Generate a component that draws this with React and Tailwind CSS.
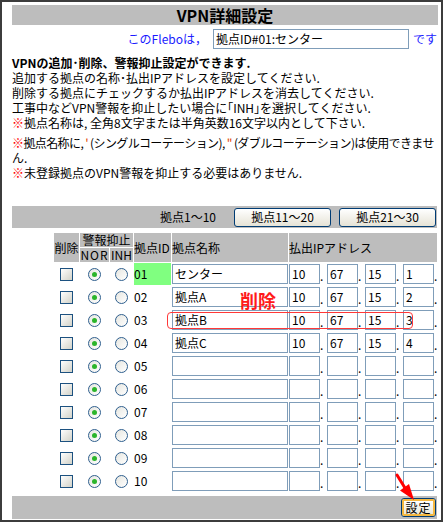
import React from "react";

const rows = [
  { id: "01", name: "センター", ip: ["10", "67", "15", "1"] },
  { id: "02", name: "拠点A", ip: ["10", "67", "15", "2"] },
  { id: "03", name: "拠点B", ip: ["10", "67", "15", "3"] },
  { id: "04", name: "拠点C", ip: ["10", "67", "15", "4"] },
  { id: "05", name: "", ip: ["", "", "", ""] },
  { id: "06", name: "", ip: ["", "", "", ""] },
  { id: "07", name: "", ip: ["", "", "", ""] },
  { id: "08", name: "", ip: ["", "", "", ""] },
  { id: "09", name: "", ip: ["", "", "", ""] },
  { id: "10", name: "", ip: ["", "", "", ""] },
];

function Checkbox() {
  return (
    <span className="block w-[13px] h-[13px] border border-[#1c5180] bg-linear-to-br from-white to-[#d2d2c8]" />
  );
}

function Radio({ checked }) {
  return (
    <span className="flex items-center justify-center w-[13px] h-[13px] rounded-full border border-[#2f5f8e] bg-linear-to-br from-[#e6e6e0] to-white">
      {checked && <span className="block w-[5px] h-[5px] rounded-full bg-[#2bb52b]" />}
    </span>
  );
}

function Field({ w, value }) {
  return (
    <div
      className={`${w} h-[20px] border border-[#7f9db9] bg-white px-[2px] flex items-center text-[12px] leading-[14px] text-black whitespace-nowrap overflow-hidden`}
    >
      {value}
    </div>
  );
}

function XpButton({ children, w }) {
  return (
    <div
      className={`${w} h-[19px] rounded-[3px] border border-[#003c74] bg-linear-to-b from-white to-[#e6e3d6] flex items-center justify-center text-[12px] leading-[14px] text-black`}
    >
      {children}
    </div>
  );
}

const Red = ({ children }) => <span className="text-[#ff0000]">{children}</span>;

export default function App() {
  return (
    <div className="relative w-[443px] h-[522px] bg-white border-2 border-[#3c3c3c] overflow-hidden font-['Noto_Sans_CJK_JP','Noto_Sans',sans-serif] text-black">
      <div className="ml-[10px] mt-[3px] w-[426px]">
        {/* Title */}
        <div className="h-[20px] bg-[#bdbdbd] flex items-center justify-center text-[16px] leading-[20px] font-bold">
          VPN詳細設定
        </div>

        {/* Flebo row */}
        <div className="mt-[4px] h-[20px] flex items-center justify-end pr-[1px] text-[12px] leading-[14px]">
          <span className="text-[#1a1aff]">このFleboは，</span>
          <div className="ml-[6px]">
            <Field w="w-[196px]" value="拠点ID#01:センター" />
          </div>
          <span className="ml-[4px] text-[#1a1aff]">です</span>
        </div>

        {/* Description */}
        <div className="mt-[6px] text-[12px] leading-[15px]">
          <p className="font-bold">VPNの追加･削除、警報抑止設定ができます.</p>
          <p>追加する拠点の名称･払出IPアドレスを設定してください.</p>
          <p>削除する拠点にチェックするか払出IPアドレスを消去してください.</p>
          <p>工事中などVPN警報を抑止したい場合に｢INH｣を選択してください.</p>
          <p>
            <Red>※</Red>拠点名称は, 全角8文字または半角英数16文字以内として下さい.
          </p>
          <p className="mt-[5px] tracking-[-0.6px] whitespace-nowrap">
            <Red>※</Red>拠点名称に, <span className="text-[#e04000]">&#39;</span> (シングルコーテーション), <span className="text-[#e04000]">&quot;</span> (ダブルコーテーション)は使用できませ
          </p>
          <p className="text-black">ん.</p>
          <p>
            <Red>※</Red>未登録拠点のVPN警報を抑止する必要はありません.
          </p>
        </div>

        {/* Paging bar */}
        <div className="mt-[26px] w-[425px] h-[22px] bg-[#bdbdbd] flex items-center justify-end pr-[1px] text-[12px] leading-[14px]">
          <span>拠点1〜10</span>
          <div className="ml-[18px]">
            <XpButton w="w-[97px]">拠点11〜20</XpButton>
          </div>
          <div className="ml-[8px]">
            <XpButton w="w-[97px]">拠点21〜30</XpButton>
          </div>
        </div>

        {/* Table */}
        <div className="mt-[5px] ml-[42px] grid grid-cols-[25px_29px_23px_37px_116px_148px] grid-rows-[14px_14px_repeat(10,22px)] gap-px text-[12px] leading-[14px]">
          <div className="row-span-2 bg-[#bdbdbd] flex items-center justify-center">削除</div>
          <div className="col-span-2 bg-[#bdbdbd] flex items-center justify-center">警報抑止</div>
          <div className="row-span-2 bg-[#bdbdbd] flex items-center whitespace-nowrap">拠点ID</div>
          <div className="row-span-2 bg-[#bdbdbd] flex items-center">拠点名称</div>
          <div className="row-span-2 bg-[#bdbdbd] flex items-center">払出IPアドレス</div>
          <div className="bg-[#bdbdbd] flex items-center justify-center tracking-[1px]">NOR</div>
          <div className="bg-[#bdbdbd] flex items-center justify-center">INH</div>

          {rows.map((r, i) => (
            <React.Fragment key={r.id}>
              <div className="flex items-center justify-center">
                <Checkbox />
              </div>
              <div className="flex items-center justify-center">
                <Radio checked />
              </div>
              <div className="flex items-center justify-center">
                <Radio />
              </div>
              <div className={`flex items-center text-black ${i === 0 ? "bg-[#80ff80]" : ""}`}>{r.id}</div>
              <div className="flex items-center">
                <Field w="w-[116px]" value={r.name} />
              </div>
              <div className="flex items-center">
                {r.ip.map((v, k) => (
                  <React.Fragment key={k}>
                    <Field w="w-[31px] shrink-0" value={v} />
                    <span className={`${k === 3 ? "w-[3px]" : "w-[7px]"} shrink-0 h-[20px] flex items-end text-[12px] leading-[16px] overflow-visible`}>
                      .
                    </span>
                  </React.Fragment>
                ))}
              </div>
            </React.Fragment>
          ))}
        </div>

        {/* Bottom bar */}
        <div className="mt-[4px] w-[425px] h-[23px] bg-[#bdbdbd] flex items-center justify-end pr-[1px]">
          <div className="rounded-[3px] border border-[#003c74]">
            <div className="w-[33px] h-[17px] rounded-[2px] border-2 border-[#f5b840] bg-linear-to-b from-white to-[#ece9d8] flex items-center justify-center text-[12px] leading-[14px] tracking-[1px]">
              設定
            </div>
          </div>
        </div>
      </div>

      {/* Annotations */}
      <span className="absolute left-[238px] top-[288px] text-[18px] leading-[20px] font-bold text-[#ff1a1a]">
        削除
      </span>
      <div className="absolute left-[165px] top-[310px] w-[246px] h-[17px] rounded-[4px] border border-[#ff3838]" />
      <svg className="absolute left-[390px] top-[468px]" width="30" height="37" viewBox="0 0 30 37">
        <line x1="5" y1="5" x2="13" y2="18" stroke="#ff0000" strokeWidth="3" strokeLinecap="round" />
        <polygon points="22,30 17,14 8,20.5" fill="#ff0000" />
      </svg>
    </div>
  );
}
